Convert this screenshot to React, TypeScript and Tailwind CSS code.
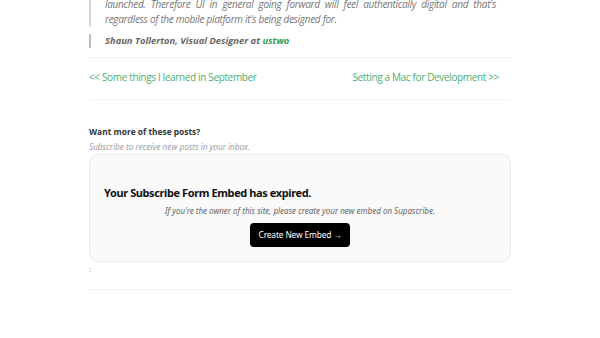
export default function App() {
  return (
    <div className="min-h-[338px] w-[600px] overflow-hidden bg-white font-['Open_Sans',sans-serif]">
      <div className="mx-auto w-[422px]">
        <blockquote className="-mt-[3px] border-l-2 border-[#d4d4d4] pl-[14px] pr-[15px] text-[10px] italic leading-[15px] tracking-[-0.3px] text-[#777]">
          <p className="text-justify [text-align-last:justify]">
            launched. Therefore UI in general going forward will feel authentically digital and that's
          </p>
          <p>regardless of the mobile platform it's being designed for.</p>
        </blockquote>

        <p className="mt-[7px] border-l-2 border-[#bdbdbd] pl-[14px] text-[9.4px] font-bold italic leading-[14px] text-[#666]">
          Shaun Tollerton, Visual Designer at{" "}
          <a className="text-[#2e9e55]">ustwo</a>
        </p>

        <hr className="mt-[9px] border-t border-[#f2f2f2]" />

        <div className="flex items-center justify-between pr-[12px] pt-[11px] pb-[14px] text-[10px] leading-[16px] tracking-[-0.35px] text-[#4caf70]">
          <a>&lt;&lt; Some things I learned in September</a>
          <a>Setting a Mac for Development &gt;&gt;</a>
        </div>

        <hr className="border-t border-[#f3f3f3]" />

        <div className="pt-[25px]">
          <p className="text-[8.4px] font-bold leading-[14px] text-[#333]">Want more of these posts?</p>
          <p className="mt-[1px] text-[8.2px] italic leading-[13px] text-[#999]">
            Subscribe to receive new posts in your inbox.
          </p>

          <div className="mt-[1px] flex h-[108px] flex-col rounded-lg border border-[#ebebeb] bg-[#fafafa] px-[14px] pt-[30px] font-['Noto_Sans',sans-serif]">
            <h3 className="text-[11px] font-bold leading-[16px] tracking-[-0.4px] text-[#111]">
              Your Subscribe Form Embed has expired.
            </h3>
            <p className="mt-[4px] text-center text-[8px] italic leading-[12px] text-[#666]">
              If you're the owner of this site, please create your new embed on Supascribe.
            </p>
            <div className="mt-[6px] flex justify-center">
              <button className="h-[24px] w-[100px] rounded-[4px] bg-black text-[8.4px] tracking-[-0.15px] text-white">
                Create New Embed →
              </button>
            </div>
          </div>

          <p className="mt-[1px] text-[8px] leading-[12px] text-[#999]">:</p>
          <hr className="mt-[14px] border-t border-[#f0f0f0]" />
        </div>
      </div>
    </div>
  );
}
